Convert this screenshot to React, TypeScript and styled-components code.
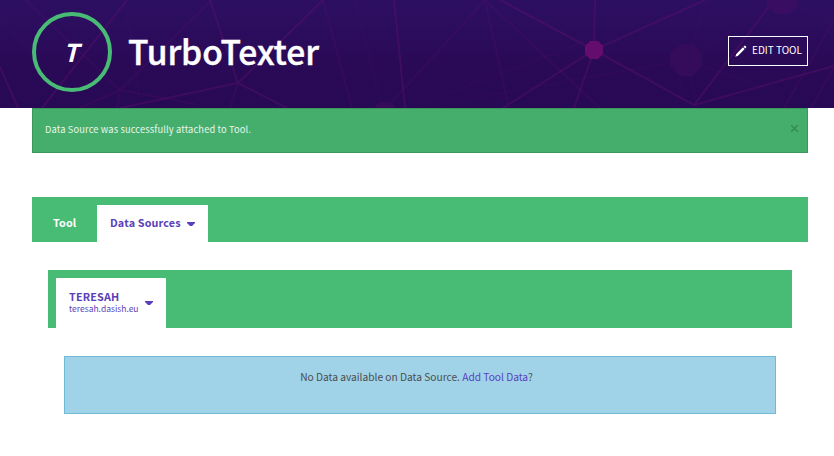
import React from 'react';
import styled, { createGlobalStyle } from 'styled-components';

const GlobalStyle = createGlobalStyle`
  *, *::before, *::after { box-sizing: border-box; }
  body {
    margin: 0;
    background: #fff;
    color: #4d4d4d;
    font-family: "Noto Sans CJK SC", "Noto Sans", sans-serif;
    font-size: 10.2px;
    line-height: 16px;
    overflow: hidden;
  }
`;

const Header = styled.header`
  position: relative;
  display: flex;
  align-items: center;
  height: 108px;
  padding: 0 26px 4px 32px;
  background: linear-gradient(#2d0f62, #2a0a57 60%, #280956);
  overflow: hidden;
`;

const Backdrop = styled.svg`
  position: absolute;
  inset: 0;
`;

const Logo = styled.div`
  position: relative;
  display: flex;
  align-items: center;
  justify-content: center;
  width: 80px;
  height: 80px;
  border: 4px solid #48bb74;
  border-radius: 50%;
  padding: 0 2px 0 0;
  color: #fff;
  font: italic 700 24.5px/30px "Noto Sans CJK SC", sans-serif;
`;

const Title = styled.h1`
  position: relative;
  flex: 1;
  margin: 0 0 3px 16px;
  color: #fff;
  font-size: 33.6px;
  font-weight: 500;
  letter-spacing: -0.08px;
  line-height: 40px;
  -webkit-text-stroke: 0.4px #fff;
`;

const EditButton = styled.button`
  position: relative;
  display: flex;
  align-items: center;
  gap: 5px;
  width: 80px;
  height: 30px;
  margin-bottom: 2px;
  padding: 0 0 2px 6px;
  border: 1px solid #fff;
  background: none;
  color: #fff;
  font-family: inherit;
  font-size: 10px;
  line-height: 16px;
  white-space: nowrap;

  svg { position: relative; top: 1px; }
`;

const Content = styled.main`
  padding: 0 26px 0 32px;
`;

const Alert = styled.div`
  display: flex;
  justify-content: space-between;
  height: 45px;
  padding: 12px 8px 0 12px;
  border: 1px solid #3a985d;
  background: #46ae6c;
  color: #e8f6ed;
  font-size: 9.3px;
  letter-spacing: 0.14px;
`;

const Close = styled.button`
  display: flex;
  width: 9px;
  height: 9px;
  margin-top: 3px;
  padding: 0;
  border: 0;
  background: none;
  color: #368a55;
`;

const TabBar = styled.nav<{ $nested?: boolean }>`
  display: flex;
  align-items: stretch;
  height: ${p => (p.$nested ? 58 : 45)}px;
  margin: ${p => (p.$nested ? '28px 16px 0' : '44px 0 0')};
  padding: 8px 0 0 8px;
  background: #48bb74;
`;

const Tab = styled.a<{ $active?: boolean; $width: number }>`
  display: flex;
  align-items: center;
  gap: 6px;
  width: ${p => p.$width}px;
  padding: 0 0 3px 13px;
  background: ${p => (p.$active ? '#fff' : 'transparent')};
  color: ${p => (p.$active ? '#5a3fb8' : '#fff')};
  font-size: 10.8px;
  font-weight: 700;
  letter-spacing: 0.15px;
  white-space: nowrap;
`;

const Source = styled.span`
  display: flex;
  flex-direction: column;
  margin-top: 1px;
  line-height: 12px;
`;

const Host = styled.small`
  font-size: 8.5px;
  font-weight: 400;
  letter-spacing: 0;
`;

const Caret = styled.svg`
  margin-top: 3px;
`;

const Notice = styled.p`
  height: 58px;
  margin: 28px 32px 0;
  padding: 12px 7px 0 0;
  border: 1px solid #70bad6;
  background: #a0d3e8;
  text-align: center;
`;

const Link = styled.a`
  color: #5a3fc0;
`;

const strongLines = [
  [0, 67, 18, 108], [127, 0, 42, 108], [210, 0, 238, 83], [238, 83, 120, 108],
  [238, 83, 287, 108], [238, 83, 323, 0], [394, 0, 405, 108], [500, 0, 594, 50],
  [594, 50, 503, 108], [594, 50, 595, 0], [594, 50, 705, 0], [594, 50, 694, 105],
  [594, 50, 574, 108], [774, 0, 694, 105], [694, 105, 834, 66],
];

const softLines = [
  [25, 0, 120, 90], [238, 83, 230, 108], [323, 0, 352, 108], [485, 0, 390, 104],
  [485, 0, 508, 104], [485, 0, 600, 108], [834, 20, 784, 108], [834, 67, 811, 108],
  [120, 90, 80, 108], [120, 90, 117, 108], [120, 90, 195, 104], [212, 0, 120, 90],
];

const faintLines = [
  [0, 17, 33, 54], [355, 0, 382, 108], [420, 104, 594, 38], [440, 104, 686, 60],
  [686, 60, 708, 0], [686, 60, 676, 108], [686, 60, 697, 108], [686, 60, 782, 0],
  [782, 0, 834, 22], [686, 60, 770, 90], [125, 0, 140, 100],
];

const Lines = ({ data, opacity }: { data: number[][]; opacity: number }) => (
  <g stroke="#64106f" strokeWidth="2" opacity={opacity}>
    {data.map(([x1, y1, x2, y2], i) => (
      <line key={i} x1={x1} y1={y1} x2={x2} y2={y2} />
    ))}
  </g>
);

const Network = () => (
  <Backdrop width="834" height="108" viewBox="0 0 834 108" aria-hidden="true">
    <Lines data={faintLines} opacity={0.08} />
    <Lines data={softLines} opacity={0.18} />
    <Lines data={strongLines} opacity={0.36} />
    <polygon points="590,41 598,41 603,46 603,54 598,59 590,59 585,54 585,46" fill="#650d6f" />
    <polygon points="680,44 693,44 702,53 702,66 693,76 680,76 670,66 670,53" fill="#350b5b" />
    <polygon points="766,-8 798,-8 797,6 789,14 776,14 767,6" fill="#390d62" />
    <polygon points="376,105 380,102 391,102 396,108 374,108" fill="#350a5a" />
  </Backdrop>
);

const CaretDown = () => (
  <Caret width="8" height="4" viewBox="0 0 8 4" fill="#5a3fb8" aria-hidden="true">
    <path d="M0 0H8V1L5 4H3L0 1Z" />
  </Caret>
);

export default function App() {
  return (
    <>
      <GlobalStyle />
      <Header>
        <Network />
        <Logo>T</Logo>
        <Title>TurboTexter</Title>
        <EditButton>
          <svg width="12" height="12" viewBox="0 0 12 12" fill="#fff" aria-hidden="true">
            <path d="M.3 11.7 1.3 8.9 7.9 2.3 9.7 4.1 3.1 10.7ZM8.5 1.7 9.4.8Q9.9.4 10.4.9L11.1 1.6Q11.6 2.1 11.2 2.6L10.3 3.5Z" />
          </svg>
          EDIT TOOL
        </EditButton>
      </Header>
      <Content>
        <Alert role="alert">
          Data Source was successfully attached to Tool.
          <Close aria-label="Close">
            <svg width="9" height="9" viewBox="0 0 9 9" stroke="currentColor" strokeWidth="1.5">
              <path d="m1.2 1.2 6.6 6.6m0-6.6-6.6 6.6" />
            </svg>
          </Close>
        </Alert>
        <TabBar>
          <Tab $width={57}>Tool</Tab>
          <Tab $active $width={111}>
            Data Sources
            <CaretDown />
          </Tab>
        </TabBar>
        <TabBar $nested>
          <Tab $active $width={110}>
            <Source>
              TERESAH
              <Host>teresah.dasish.eu</Host>
            </Source>
            <CaretDown />
          </Tab>
        </TabBar>
        <Notice>
          No Data available on Data Source. <Link>Add Tool Data</Link>?
        </Notice>
      </Content>
    </>
  );
}
